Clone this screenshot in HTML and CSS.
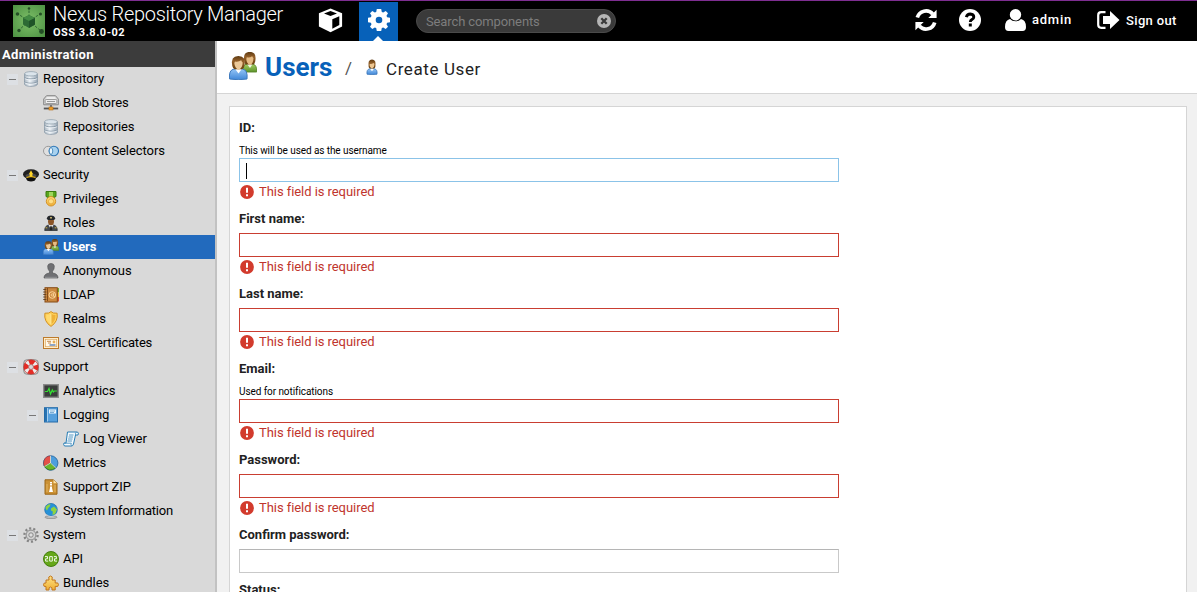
FILE: index.html
```
<!DOCTYPE html>
<html lang="en">
<head>
<meta charset="utf-8">
<title>Nexus Repository Manager</title>
<link rel="stylesheet" href="styles.css">
</head>
<body>
<svg class="defs" aria-hidden="true">
  <defs>
    <linearGradient id="steel"><stop offset="0" stop-color="#a9b5c0"/><stop offset=".4" stop-color="#eef3f7"/><stop offset="1" stop-color="#94a3b2"/></linearGradient>
    <linearGradient id="hair" x2="0" y2="1"><stop offset="0" stop-color="#5d3a12"/><stop offset=".4" stop-color="#94602a"/><stop offset="1" stop-color="#68400f"/></linearGradient>
    <linearGradient id="blue" x2="0" y2="1"><stop offset="0" stop-color="#95c5f6"/><stop offset="1" stop-color="#4087d8"/></linearGradient>
    <linearGradient id="green" x2="0" y2="1"><stop offset="0" stop-color="#a5cf65"/><stop offset="1" stop-color="#5c932a"/></linearGradient>
    <linearGradient id="gold" x2="0" y2="1"><stop offset="0" stop-color="#ffe487"/><stop offset="1" stop-color="#efae31"/></linearGradient>
    <radialGradient id="moss" r=".7"><stop offset="0" stop-color="#7fc069"/><stop offset="1" stop-color="#4c9142"/></radialGradient>
  </defs>
  <symbol id="db" viewBox="0 0 16 16">
    <path d="M1.500 3v10c0 1.400 2.900 2.400 6.500 2.400s6.500-1 6.500-2.400V3z" fill="url(#steel)" stroke="#8b9ba8" stroke-width=".8"/>
    <path d="M1.600 6.300c.5 2.200 12.300 2.200 12.800 0M1.600 10.600c.5 2.200 12.300 2.200 12.800 0" fill="none" stroke="#7c8d9c" stroke-width=".9"/>
    <path d="M1.800 7.300c1 2 11.400 2 12.400 0M1.800 11.600c1 2 11.400 2 12.400 0" fill="none" stroke="#f4f8fb" stroke-width=".8"/>
    <ellipse cx="8" cy="2.800" rx="6.500" ry="2.200" fill="#dbe4eb" stroke="#94a3af" stroke-width=".8"/>
  </symbol>
  <symbol id="drive" viewBox="0 0 16 16">
    <path d="M3.500.7h9L15.300 4v5.800H.7V4z" fill="#d7d7d7" stroke="#858585" stroke-width="1"/>
    <path d="M4 2.200h8l1 1.500H3z" fill="#f5f5f5"/><rect x="2.200" y="4.500" width="11.600" height="4" rx="1" fill="#eee" stroke="#8a8a8a" stroke-width=".8"/><path d="M4 6.500h8" stroke="#999"/>
    <path d="M8 10v3" stroke="#777" stroke-width="2"/><path d="M.8 13.500h14.400" stroke="#555" stroke-width="1.800"/><rect x="6" y="12" width="4" height="3" fill="#f0a02a" stroke="#b66d16" stroke-width=".6"/>
  </symbol>
  <symbol id="rings" viewBox="0 0 16 16">
    <circle cx="5.200" cy="8" r="4.700" fill="#e0e0e0" stroke="#9a9a9a"/><circle cx="10.800" cy="8" r="4.700" fill="#a9d2ef" stroke="#2d75b5" stroke-width="1.100"/><path d="M8 4.300a4.700 4.700 0 0 0 0 7.400 4.700 4.700 0 0 0 0-7.400" fill="#e9f5fd" stroke="#508fbf"/>
  </symbol>
  <symbol id="cap" viewBox="0 0 16 16">
    <ellipse cx="8" cy="7.300" rx="8" ry="5" fill="#202020"/><path d="M2.500 8q5.500-3.500 11 0l-1.300 5Q8 15 3.800 13z" fill="#4c4c4c"/><path d="M3 11.300q5-3 10 0l-1.500 2.500Q8 15 4.500 13.800z" fill="#111"/><path d="M3.500 9.900q4.500-2 9 0v1.300q-4.500-2-9 0z" fill="#d9a70a"/><path d="m8 3.200 1.600 3-.3 3.500H6.700l-.3-3.500z" fill="#ffd529"/>
  </symbol>
  <symbol id="medal" viewBox="0 0 16 16">
    <path d="M3 .5h10v5l-2.500 1.200h-5L3 5.500z" fill="#59a51c" stroke="#3b7c0f"/><path d="M6 1h4v4H6z" fill="#9fd75c"/><circle cx="8" cy="10.300" r="4.700" fill="url(#gold)" stroke="#d59329"/><circle cx="8" cy="10.300" r="2.600" fill="#ffdf87" stroke="#e3a53a" stroke-width=".8"/>
  </symbol>
  <symbol id="officer" viewBox="0 0 16 16">
    <path d="M1.700 15.500q0-5 4.300-5.500h4q4.300.5 4.300 5.500z" fill="#44484d" stroke="#25282b" stroke-width=".7"/><path d="m5.500 10 2.500 4.500 2.500-4.500z" fill="#e8e8e8"/><path d="M7.200 11.200h1.600l.5 4H6.700z" fill="#222"/><ellipse cx="8" cy="6.500" rx="3" ry="3.700" fill="#8b5528"/><path d="M3.900 3.200Q4.200.6 8 .4q3.800.2 4.100 2.800l-.8 1.800H4.700z" fill="#24272b"/><path d="M7.200 2h1.600v1.600H7.200z" fill="#e9cf78"/><path d="M2.500 12.800h1.800M11.700 12.800h1.800" stroke="#edc540" stroke-width=".8"/>
  </symbol>
  <symbol id="person" viewBox="0 0 12 16">
    <path d="M1 15.200q-.6-5 3-5.500h4q3.600.5 3 5.500-5 .8-10 0z" fill="url(#blue)" stroke="#3975b9" stroke-width=".8"/><path d="m4 9.700 2 2.500 2-2.500z" fill="#fff"/><path d="M2.600 7.500Q1.500.4 6 .4t3.400 7.100Q9.300 9 8 9.500H4Q2.700 9 2.600 7.500z" fill="url(#hair)"/><path d="M3.800 4.800q2.300.4 4.200-.7l.5 1.500Q8.300 9 6 9.800 3.700 9 3.500 6z" fill="#edc793"/>
  </symbol>
  <symbol id="users" viewBox="0 0 28 28">
    <path d="M13.500 20q-.5-7.500 4.500-8h5.500q4.500.5 4.200 8z" fill="url(#green)" stroke="#578528" stroke-width=".9"/><path d="m18 12 3 4 2.700-4z" fill="#eff7e8"/><path d="M15.300 9.500Q13.500-.2 20.800-.1 28-.2 26.200 9.500q-.4 2.500-2.200 3h-6.500q-1.800-.5-2.200-3z" fill="url(#hair)"/><path d="M17.800 5.300q3 .5 5.400-1.100.7 1.500 1.300 1.800Q24.300 11.500 21 13.300 17.500 11.500 17.300 7z" fill="#e6bc85"/>
    <path d="M.6 27Q-.5 18 5 17h8.500q5.500 1 4.500 10-8.500 1.500-17.400 0z" fill="url(#blue)" stroke="#3f7abd" stroke-width="1"/><path d="m6 16.800 3.500 4.700 3.500-4.700z" fill="#fff"/><path d="M3.300 14Q1.300 3.800 9.400 3.900q8-.1 6 10.100-.5 2.700-2.400 3.300H5.800Q3.800 16.700 3.300 14z" fill="url(#hair)"/><path d="M6 9.500q3.500.7 6.200-1.200.6 1.700 1.500 2.200-.1 5.500-4.200 7.500Q5.600 16 5.300 11z" fill="#ecc999"/>
  </symbol>
  <symbol id="anon" viewBox="0 0 16 16">
    <path d="M1 15q0-4.300 5.500-5V8.300Q4.500 6.500 4.700 3 5 .5 8 .5t3.300 2.500q.2 3.500-1.800 5.300V10q5.500.7 5.500 5z" fill="#6f7073" stroke="#595a5c" stroke-width=".7"/><path d="M2 14.300h12" stroke="#929395"/>
  </symbol>
  <symbol id="book" viewBox="0 0 16 16">
    <path d="M14 1h2v4.500h-2z" fill="#79aa27"/><path d="M14 5.500h2V10h-2z" fill="#f5bd30"/><path d="M14 10h2v4.500h-2z" fill="#dc5132"/><rect x="2" y=".7" width="12.300" height="14.300" fill="#cb883f" stroke="#854b17"/><path d="M4.500 1v13" stroke="#854b17"/><path d="M.3 2.500h3M.3 5h3M.3 7.500h3M.3 10h3M.3 12.500h3" stroke="#684625" stroke-width="1.100"/><circle cx="9.300" cy="8" r="3.300" fill="none" stroke="#ffdba1" stroke-width=".9"/><circle cx="9.300" cy="8" r="1.200" fill="none" stroke="#ffdba1" stroke-width=".8"/><path d="M10.700 6v3.500h1.500" fill="none" stroke="#ffdba1" stroke-width=".8"/>
  </symbol>
  <symbol id="shield" viewBox="0 0 16 16">
    <path d="M8 .6 10.300 2l3.800.2q1.300 8.300-6.100 13.200Q.6 10.500 1.900 2.200L5.700 2z" fill="#ffd25b" stroke="#d29022"/><path d="M8 2.500 10 3.800l2.500.2q.4 6-4.500 9.500z" fill="#efb238"/><path d="M8 2.500 6 3.800 3.500 4Q3 10 8 13.500z" fill="#ffda70"/><path d="M8 3v10" stroke="#fff0a9" stroke-width=".7"/>
  </symbol>
  <symbol id="cert" viewBox="0 0 16 16">
    <rect x=".5" y="2.500" width="15" height="11" fill="#fff1cf" stroke="#bd7a2b"/><rect x="2.300" y="4.300" width="11.400" height="7.400" fill="#fff8e8" stroke="#dba35b" stroke-width=".7"/><path d="M4 6.300h4M5 8h3" stroke="#b96c25" stroke-width=".8"/><circle cx="11" cy="7" r="1.400" fill="#e7ae57"/><path d="M6.500 10h6" stroke="#416dad" stroke-width="1.200"/>
  </symbol>
  <symbol id="ring" viewBox="0 0 16 16">
    <rect x=".8" y=".8" width="14.400" height="14.400" rx="3" fill="none" stroke="#8a8a8a"/><circle cx="8" cy="8" r="5" fill="none" stroke="#e52c25" stroke-width="4.700"/><circle cx="8" cy="8" r="5" fill="none" stroke="#ececec" stroke-width="4.700" stroke-dasharray="2.700 5.154" stroke-dashoffset="-2.577"/><circle cx="8" cy="8" r="7.400" fill="none" stroke="#b23a34" stroke-width=".6"/><circle cx="8" cy="8" r="2.500" fill="none" stroke="#a84a44" stroke-width=".6"/>
  </symbol>
  <symbol id="scope" viewBox="0 0 16 16"><rect x=".7" y="1.700" width="14.600" height="12.600" fill="#3a3d3b" stroke="#8a8a8a" stroke-width="1.400"/><path d="M2 8.500h2.500L6 5.500l1.500 5.500L9.300 7l1 2 .9-1H14" fill="none" stroke="#36df34" stroke-width="1.200"/></symbol>
  <symbol id="log" viewBox="0 0 16 16"><rect x="1.500" y=".7" width="13" height="14.300" fill="#56a0dd" stroke="#246ba8"/><path d="M2 1h2v13.500H2z" fill="#2874b3"/><path d="M4.500 1v13.500" stroke="#c7e3f6" stroke-width=".7"/><rect x="6" y="2.500" width="7" height="4" fill="#edf6fd"/><path d="M7 4h5M7 5.500h4" stroke="#4c8fc2" stroke-width=".7"/></symbol>
  <symbol id="scroll" viewBox="0 0 16 16"><path d="M4.500 1h10q1.500 1 .5 3h-2.500l-2 9q-.5 2-2 2H1.500Q0 13.500 1 12h2z" fill="#f4fafe" stroke="#287db4"/><path d="M12.500 4q-.5-2 1-3M1.300 12.200h7q-.8 1.500.5 2.700M6 4h4.500M5.500 6h4.500M5 8h4.500M4.500 10H9" fill="none" stroke="#488fbd" stroke-width=".9"/></symbol>
  <symbol id="pie" viewBox="0 0 16 16"><circle cx="7.700" cy="8" r="7.200" fill="#4d9edd" stroke="#2f6fa5"/><path d="M7.500 8V.9Q1 1.200.7 8q0 2 .8 3.500z" fill="#e45047" stroke="#a8322b" stroke-width=".5"/><path d="m7.500 8-6 3.500q4.500 6 11 1.500z" fill="#6ab52a" stroke="#37720f" stroke-width=".7"/><path d="M7.500.8V8l5.300 5M7.500 8l-6 3.500" fill="none" stroke="#e5efe1" stroke-width=".8"/></symbol>
  <symbol id="zip" viewBox="0 0 16 16"><path d="M2 .8h8.500L14 4.300v10.900H2z" fill="#cb9134" stroke="#9a6618"/><path d="M10.500.8v3.500H14z" fill="#ffe3a4"/><path d="M8 3v8" stroke="#fff" stroke-width="2" stroke-dasharray="1.200 .5"/><path d="m7 9-1 4h4L9 9" fill="#fff"/><path d="M4 5v8M12 6v7" stroke="#e2b563"/></symbol>
  <symbol id="globe" viewBox="0 0 16 16"><ellipse cx="8" cy="14.200" rx="6" ry="1.500" fill="#bbb" stroke="#777" stroke-width=".6"/><circle cx="8" cy="6.700" r="6.300" fill="#2691d8" stroke="#1b6dab" stroke-width=".7"/><path d="M3 3.500Q5 1 7.500 1.200L6.800 3.500 5.300 5 4 7.500Q2 6 3 3.500M8 5.500l3-2 3 3-1.800 4.300L9.500 12l.3-3.500L8 7.500z" fill="#8fd340"/><path d="M3.500 11.500q4.500 4 9 0" fill="none" stroke="#e0e0e0" stroke-width=".8"/></symbol>
  <symbol id="cog" viewBox="0 0 16 16"><circle cx="8" cy="8" r="6.600" fill="none" stroke="#858585" stroke-width="2.300" stroke-dasharray="2.100 2.047"/><circle cx="8" cy="8" r="4.900" fill="#d2d2d2" stroke="#8c8c8c" stroke-width="1"/><circle cx="8" cy="8" r="2.200" fill="#ddd" stroke="#808080" stroke-width=".9"/></symbol>
  <symbol id="api" viewBox="0 0 16 16"><circle cx="8" cy="8" r="7.500" fill="#65a719" stroke="#3c7606" stroke-width=".9"/><path d="M2 5.600h2.500v2.200H2.600v2.300h2.600M6.700 5.600h2.600v4.500H6.700zM10.900 5.600h2.500v2.200h-1.900v2.300h2.600" fill="none" stroke="#fff" stroke-width=".9"/></symbol>
  <symbol id="puzzle" viewBox="0 0 16 16"><path d="M3 5h3Q4.800 1 7.500 1T9 5h3.200v3Q15.500 7 15.500 9.700T12.200 11.400V15H9q.5-3-1.500-3T6 15H3v-3.500Q.5 12 .5 9.700T3 8z" fill="url(#gold)" stroke="#c2761d"/></symbol>
  <symbol id="alert" viewBox="0 0 14 14"><circle cx="7" cy="7" r="6.900" fill="#d23b2d"/><path d="M7 2.800v4.900M7 9.300v2" stroke="#fff" stroke-width="2"/></symbol>
</svg>

<header class="topbar">
  <svg class="logo" viewBox="0 0 32 32"><path fill="url(#moss)" d="M0 0h32v32H0z"/><path d="M16 16V5M16 16 5 9M16 16l11-7M16 16 6 25M16 16l12 10" stroke="#2d6431" stroke-dasharray="2.500 1.500"/><g fill="#244e26"><circle cx="16" cy="3.500" r="1.300"/><circle cx="4.500" cy="9" r="1.800"/><circle cx="27.500" cy="9" r="1.500"/><circle cx="6" cy="25.500" r="1.700"/><circle cx="28.500" cy="26.500" r="2.400"/></g><path d="m16 10 6 3v6.500L16 23l-6-3.500V13z" fill="#2c6a34"/><path d="m10 13 6-3 6 3-6 3z" fill="#438b43"/><path d="m16 16 6-3v6.500L16 23z" fill="#1f5428"/></svg>
  <div class="brand"><div class="product">Nexus Repository Manager</div><div class="version">OSS 3.8.0-02</div></div>
  <div class="mode mode-browse"><svg width="25" height="25" viewBox="0 0 25 25"><path d="m12.500.6 11.600 4.600v13.400L12.500 24.300.9 18.600V5.200z" fill="#fff"/><path d="m6 5.500 6.500-2.400L19 5.500l-6.500 2.600zM14.300 11.200l7-3v8.900l-7 3.600z" fill="#000"/></svg></div>
  <div class="mode mode-admin"><svg width="22" height="22" viewBox="0 0 22 22"><path fill="#fff" fill-rule="evenodd" d="M8.800 0h4.400l.6 2.900 1.400.6L17.700 2 20 4.300l-1.500 2.500.6 1.400 2.900.6v4.400l-2.900.6-.6 1.400 1.500 2.500-2.300 2.300-2.500-1.500-1.400.6-.6 2.900H8.800l-.6-2.900-1.400-.6L4.300 20 2 17.700l1.500-2.500-.6-1.400L0 13.200V8.800l2.900-.6.6-1.400L2 4.300 4.300 2l2.500 1.500 1.400-.6zM11 7.700a3.300 3.300 0 1 0 0 6.600 3.300 3.300 0 0 0 0-6.600z"/></svg><span class="notch"></span></div>
  <div class="search"><span>Search components</span><svg width="14" height="14" viewBox="0 0 14 14"><circle cx="7" cy="7" r="7" fill="#b5b5b5"/><path d="m4.300 4.300 5.400 5.400m0-5.400-5.400 5.400" stroke="#3a3a3a" stroke-width="2.300"/></svg></div>
  <div class="actions">
    <svg class="refresh" width="22" height="22" viewBox="0 0 22 22"><path d="M2.300 8.600A9 9 0 0 1 17.700 5M19.700 13.400A9 9 0 0 1 4.300 17" fill="none" stroke="#fff" stroke-width="3.700"/><path d="M21.600.7V9h-8.300zM.4 21.300V13h8.300z" fill="#fff"/></svg>
    <svg class="help" width="22" height="22" viewBox="0 0 22 22"><circle cx="11" cy="11" r="11" fill="#fff"/><path d="M7.300 8.100Q8.300 5 11.300 5q3.500.2 3.500 3.100 0 1.500-1.800 2.500-1.700.9-1.700 2.400" fill="none" stroke="#000" stroke-width="2.900"/><path d="M9.800 14.500h3v3h-3z"/></svg>
    <svg class="avatar" width="21" height="22" viewBox="0 0 21 22"><path fill="#fff" d="M5 10q2 2.300 5.500 2.300T16 10q5 1 5 8 0 4-3.500 4h-14Q0 22 0 18q0-7 5-8z"/><circle cx="10.500" cy="5.800" r="5.700" fill="#fff"/></svg>
    <span class="username">admin</span>
    <svg class="exit" width="23" height="18" viewBox="0 0 23 18"><path d="M8.500 1.200H4.200q-3 0-3 3v9.600q0 3 3 3h4.300" fill="none" stroke="#fff" stroke-width="2.200"/><path fill="#fff" d="M6 5h7V0l9.500 9L13 18v-5H6z"/></svg>
    <span class="signout">Sign out</span>
  </div>
</header>

<div class="workspace">
  <nav class="sidebar">
    <div class="sidebar-title">Administration</div>
    <ul class="tree">
      <li class="node group"><i class="toggle"></i><svg><use href="#db"/></svg><span>Repository</span></li>
      <li class="node"><svg><use href="#drive"/></svg><span>Blob Stores</span></li>
      <li class="node"><svg><use href="#db"/></svg><span>Repositories</span></li>
      <li class="node"><svg><use href="#rings"/></svg><span>Content Selectors</span></li>
      <li class="node group"><i class="toggle"></i><svg><use href="#cap"/></svg><span>Security</span></li>
      <li class="node"><svg><use href="#medal"/></svg><span>Privileges</span></li>
      <li class="node"><svg><use href="#officer"/></svg><span>Roles</span></li>
      <li class="node selected"><svg><use href="#users"/></svg><span>Users</span></li>
      <li class="node"><svg><use href="#anon"/></svg><span>Anonymous</span></li>
      <li class="node"><svg><use href="#book"/></svg><span>LDAP</span></li>
      <li class="node"><svg><use href="#shield"/></svg><span>Realms</span></li>
      <li class="node tight"><svg><use href="#cert"/></svg><span>SSL Certificates</span></li>
      <li class="node group"><i class="toggle"></i><svg><use href="#ring"/></svg><span>Support</span></li>
      <li class="node"><svg><use href="#scope"/></svg><span>Analytics</span></li>
      <li class="node subgroup"><i class="toggle"></i><svg><use href="#log"/></svg><span>Logging</span></li>
      <li class="node deep"><svg><use href="#scroll"/></svg><span>Log Viewer</span></li>
      <li class="node"><svg><use href="#pie"/></svg><span>Metrics</span></li>
      <li class="node"><svg><use href="#zip"/></svg><span>Support ZIP</span></li>
      <li class="node tight"><svg><use href="#globe"/></svg><span>System Information</span></li>
      <li class="node group"><i class="toggle"></i><svg><use href="#cog"/></svg><span>System</span></li>
      <li class="node"><svg><use href="#api"/></svg><span>API</span></li>
      <li class="node"><svg><use href="#puzzle"/></svg><span>Bundles</span></li>
    </ul>
  </nav>
  <main class="content">
    <div class="crumbs">
      <svg class="crumb-users"><use href="#users"/></svg><h1>Users</h1><span class="slash">/</span><svg class="crumb-person"><use href="#person"/></svg><span class="crumb-current">Create User</span>
    </div>
    <form class="panel">
      <div class="field"><label>ID:</label><small>This will be used as the username</small><div class="input focused"><span class="caret"></span></div><p class="error"><svg><use href="#alert"/></svg><span>This field is required</span></p></div>
      <div class="field"><label>First name:</label><div class="input invalid"></div><p class="error"><svg><use href="#alert"/></svg><span>This field is required</span></p></div>
      <div class="field"><label>Last name:</label><div class="input invalid"></div><p class="error"><svg><use href="#alert"/></svg><span>This field is required</span></p></div>
      <div class="field"><label>Email:</label><small>Used for notifications</small><div class="input invalid"></div><p class="error"><svg><use href="#alert"/></svg><span>This field is required</span></p></div>
      <div class="field"><label>Password:</label><div class="input invalid"></div><p class="error"><svg><use href="#alert"/></svg><span>This field is required</span></p></div>
      <div class="field"><label>Confirm password:</label><div class="input"></div></div>
      <div class="field"><label>Status:</label></div>
    </form>
  </main>
</div>
</body>
</html>
```
FILE: styles.css
```
* { box-sizing: border-box; }
body { margin: 0; width: 1197px; height: 592px; overflow: hidden; display: flex; flex-direction: column; font: 13px/24px Roboto, "Liberation Sans", sans-serif; color: #000; background: #f1f1f1; }
svg { display: block; flex: none; overflow: visible; }
.defs { position: absolute; width: 0; height: 0; }

.topbar { display: flex; align-items: flex-start; flex: none; height: 41px; padding-left: 13px; background: #000; border-top: 1px solid #7e2e91; color: #fff; }
.logo { width: 32px; height: 32px; margin-top: 4px; }
.brand { width: 254px; padding-left: 8px; white-space: nowrap; }
.product { font-size: 20px; line-height: 26px; font-weight: 300; letter-spacing: -.29px; }
.version { font-size: 11px; line-height: 12px; font-weight: 700; letter-spacing: .5px; }
.mode { display: flex; justify-content: center; }
.mode-browse { width: 60px; padding: 7px 0 0 2px; }
.mode-admin { position: relative; width: 39px; height: 39px; margin-top: 1px; padding-top: 7px; background: #0761b9; }
.notch { position: absolute; left: 14px; bottom: 0; border: 5px solid transparent; border-top: 0; border-bottom-color: #fff; }
.search { display: flex; align-items: center; justify-content: space-between; width: 200px; height: 24px; margin: 8px 0 0 18px; padding: 0 4px 0 9px; border: 1px solid #4a4a4a; border-radius: 12px; background: #3a3a3a; color: #7d7d7d; letter-spacing: -.12px; }
.search span { margin-top: 1px; }
.actions { display: flex; align-items: center; height: 38px; margin-left: 299px; font-weight: 500; }
.help { margin-left: 22px; }
.avatar { margin-left: 24px; }
.username { width: 41px; margin-left: 6px; letter-spacing: .75px; }
.exit { margin-left: 24px; }
.signout { margin: 1px 0 0 6px; letter-spacing: .35px; }

.workspace { display: flex; flex: 1; min-height: 0; }
.sidebar { width: 217px; flex: none; background: #d9d9d9; border-right: 2px solid #c2c2c2; }
.sidebar-title { height: 26px; padding-left: 2px; line-height: 27px; background: #3c3c3c; color: #fff; font-weight: 700; letter-spacing: .38px; }
.tree { list-style: none; margin: 0; padding: 0; }
.node { display: flex; align-items: center; height: 24px; padding-left: 43px; gap: 4px; white-space: nowrap; letter-spacing: -.06px; }
.node svg { width: 16px; height: 16px; }
.tight { letter-spacing: -.22px; }
.group { padding-left: 7px; }
.subgroup { padding-left: 27px; }
.deep { padding-left: 63px; }
.toggle { width: 11px; height: 11px; margin: 0 1px 0 0; background: linear-gradient(#777, #777) center / 7px 1px no-repeat #dde0e4; }
.selected { background: #226abd; color: #fff; font-weight: 700; }

.content { flex: 1; min-width: 0; }
.crumbs { display: flex; height: 53px; padding-left: 12px; background: #fff; border-bottom: 1px solid #d5d5d5; }
.crumb-users { width: 28px; height: 28px; margin-top: 11px; }
h1 { width: 68px; margin: 9px 0 0 8px; font-size: 26px; line-height: 34px; color: #0761b9; }
.slash { width: 8px; margin: 15px 0 0 12px; font-size: 17px; color: #555; }
.crumb-person { width: 12px; height: 16px; margin: 18px 2px 0 13px; }
.crumb-current { margin: 16px 0 0 6px; font-size: 17px; color: #222; letter-spacing: .6px; }
.panel { width: 958px; height: 500px; margin: 12px 0 0 12px; padding: 9px; background: #fff; border: 1px solid #d5d5d5; }
.field { margin-bottom: 5px; }
.field label { display: block; height: 24px; margin-bottom: 2px; color: #222; font-weight: 700; }
.field small { display: block; height: 16px; font-size: 10px; line-height: 18px; letter-spacing: -.08px; }
.input { width: 600px; height: 24px; border: 1px solid #c9c9c9; border-top-color: #b5b5b5; background: #fff; }
.focused { border-color: #8bc3e8; }
.invalid { border-color: #c93e31; }
.caret { display: block; width: 1px; height: 16px; margin: 4px 0 0 6px; background: #000; }
.error { display: flex; align-items: center; gap: 5px; height: 20px; margin: 0; padding-left: 1px; color: #bf352d; letter-spacing: -.06px; }
.error svg { width: 14px; height: 14px; }
```
